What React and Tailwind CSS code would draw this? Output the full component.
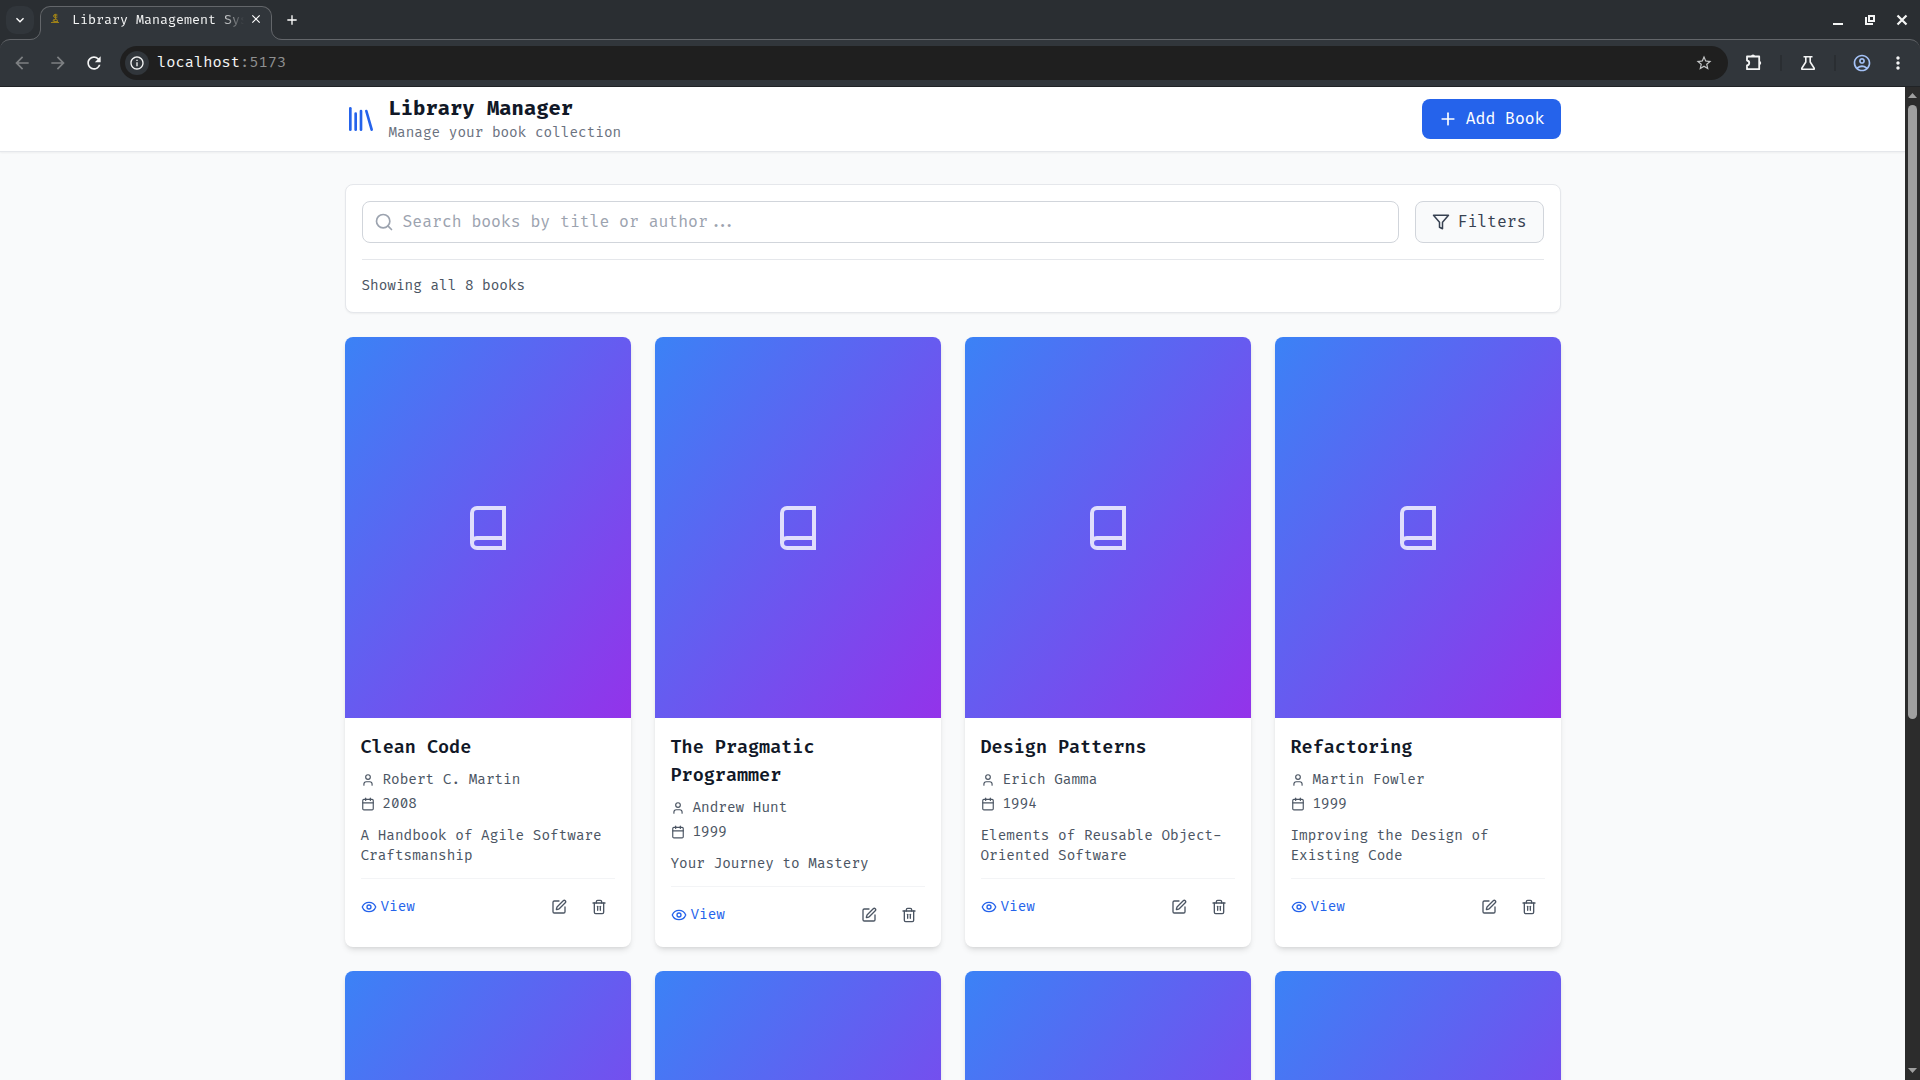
import React from "react";
import { Library, Plus, Search, User, Calendar, Eye, SquarePen, Trash2 } from "lucide-react";
import {
  MdArrowBack,
  MdArrowForward,
  MdRefresh,
  MdInfoOutline,
  MdStarBorder,
  MdOutlineAccountCircle,
  MdMoreVert,
  MdKeyboardArrowDown,
  MdClose,
  MdAdd,
} from "react-icons/md";

const books = [
  { title: "Clean Code", author: "Robert C. Martin", year: 2008, text: "A Handbook of Agile Software Craftsmanship" },
  { title: "The Pragmatic Programmer", author: "Andrew Hunt", year: 1999, text: "Your Journey to Mastery" },
  { title: "Design Patterns", author: "Erich Gamma", year: 1994, text: "Elements of Reusable Object-Oriented Software" },
  { title: "Refactoring", author: "Martin Fowler", year: 1999, text: "Improving the Design of Existing Code" },
];

function BookIcon() {
  return (
    <svg className="size-12 text-white/80" viewBox="0 0 24 24" fill="none" stroke="currentColor" strokeWidth="2" strokeLinecap="round" aria-hidden="true">
      <path d="M4 19.5v-15A2.5 2.5 0 0 1 6.5 2H20v20H6.5a2.5 2.5 0 0 1 0-5H20" />
    </svg>
  );
}

function FilterIcon() {
  return (
    <svg className="size-[18px]" viewBox="0 0 24 24" fill="none" stroke="currentColor" strokeWidth="2" strokeLinecap="round" strokeLinejoin="round" aria-hidden="true">
      <polygon points="22 3 2 3 10 12.46 10 19 14 21 14 12.46 22 3" />
    </svg>
  );
}

function PuzzleIcon() {
  return (
    <svg className="size-5" viewBox="0 0 20 20" fill="none" stroke="currentColor" strokeWidth="1.8" strokeLinejoin="round" aria-hidden="true">
      <path d="M3 3.500H15.200V16.200H3V12.500C6 12 6 8 3 7.500Z" />
      <path d="M7 3.500a2 2 0 0 1 4 0ZM15.200 8a2 2 0 0 1 0 4Z" fill="currentColor" stroke="none" />
    </svg>
  );
}

function FlaskIcon() {
  return (
    <svg className="size-5" viewBox="0 0 20 20" fill="none" stroke="currentColor" strokeWidth="1.6" strokeLinejoin="round" aria-hidden="true">
      <path d="M5.500 3.800H14.500M7.800 3.800V9L3.800 15.200V16.200H16.200V15.200L12.200 9V3.800" />
    </svg>
  );
}

function Favicon() {
  return (
    <svg className="size-4 shrink-0" viewBox="0 0 16 16" fill="none" stroke="#9c8018" strokeWidth="1" aria-hidden="true">
      <path d="M9.500 4C8.500 2.800 5.500 3 5.500 5C5.500 7 8.500 7 9.500 6M6 4.800H9M7.500 3V8M5 9L8.500 8L9.500 10M4.500 10L6.500 9.500M3 11.500H11M5.500 10.500H10" />
    </svg>
  );
}

function TabFlare({ className }) {
  return (
    <svg className={className} width="11" height="10" viewBox="0 0 11 10" fill="none" aria-hidden="true">
      <path d="M0 10V9.500A10 10 0 0 0 10.500 0H11V10Z" fill="#31363b" />
      <path d="M0 9.500A10 10 0 0 0 10.500 0" stroke="#63666a" />
    </svg>
  );
}

function TabStrip() {
  return (
    <div className="flex h-[39px] items-start pr-2.5">
      <button aria-label="Search tabs" className="ml-1.5 mt-1.5 grid size-7 place-items-center rounded-[10px] bg-[#31363b] text-white">
        <MdKeyboardArrowDown className="size-4" />
      </button>
      <div className="relative z-10 ml-1.5 mt-1.5 flex h-[34px] w-[232px] shrink-0 items-start rounded-t-[10px] border-x border-t border-[#63666a] bg-[#31363b] px-[7px] pt-1">
        <TabFlare className="absolute -left-[11px] bottom-0" />
        <TabFlare className="absolute -right-[11px] bottom-0 -scale-x-100" />
        <Favicon />
        <span className="ml-2 flex-1 overflow-hidden whitespace-nowrap text-[13px] leading-[18px] text-[#f4f5f5] [mask-image:linear-gradient(to_right,black_86%,transparent)]">
          Library Management System
        </span>
        <button aria-label="Close tab" className="ml-1 grid size-4 place-items-center text-white">
          <MdClose className="size-3.5" />
        </button>
      </div>
      <button aria-label="New tab" className="ml-2.5 mt-2.5 grid size-5 place-items-center text-white">
        <MdAdd className="size-4" />
      </button>
      <div className="ml-auto mt-3 flex items-center gap-4 text-[#f4f5f5]">
        <button aria-label="Minimize">
          <svg className="size-4" viewBox="0 0 16 16" aria-hidden="true"><path d="M3 11h10v2H3z" fill="currentColor" /></svg>
        </button>
        <button aria-label="Restore">
          <svg className="size-4" viewBox="0 0 16 16" fill="none" stroke="currentColor" strokeWidth="2" aria-hidden="true">
            <path d="M7 4h5v5H7z M4 5v7h7" />
          </svg>
        </button>
        <button aria-label="Close window">
          <svg className="size-4" viewBox="0 0 16 16" fill="none" stroke="currentColor" strokeWidth="2.200" aria-hidden="true"><path d="M3.500 3.500l9 9M12.500 3.500l-9 9" /></svg>
        </button>
      </div>
    </div>
  );
}

function Toolbar() {
  return (
    <div className="flex h-12 items-center rounded-t-[10px] border-b border-t border-b-[#202326] border-t-[#63666a] bg-[#31363b] text-[#f4f5f5]">
      <nav aria-label="History" className="flex items-center gap-4 pl-3">
        <button aria-label="Back" className="text-[#7d8083]"><MdArrowBack className="size-5" /></button>
        <button aria-label="Forward" className="text-[#7d8083]"><MdArrowForward className="size-5" /></button>
        <button aria-label="Reload"><MdRefresh className="size-5" /></button>
      </nav>
      <div className="ml-4 flex h-[34px] flex-1 items-center rounded-full bg-[#1f1f1f] px-[5px] pr-[15px]">
        <button aria-label="Site information" className="grid size-6 place-items-center rounded-full bg-[#31363b]">
          <MdInfoOutline className="size-4" />
        </button>
        <span className="ml-2 flex-1 text-[15px] leading-5">
          localhost<span className="text-[#8e8f90]">:5173</span>
        </span>
        <button aria-label="Bookmark this page" className="text-[#c4c6c7]"><MdStarBorder className="size-[18px]" /></button>
      </div>
      <div className="flex items-center pl-4 pr-3">
        <button aria-label="Extensions"><PuzzleIcon /></button>
        <span className="mx-4 h-4 w-0.5 bg-[#2a2e32]" />
        <button aria-label="Labs"><FlaskIcon /></button>
        <span className="mx-4 h-4 w-0.5 bg-[#2a2e32]" />
        <button aria-label="Profile" className="text-[#a4c2f7]"><MdOutlineAccountCircle className="size-5" /></button>
        <button aria-label="Menu" className="ml-4"><MdMoreVert className="size-5" /></button>
      </div>
    </div>
  );
}

function Scrollbar() {
  return (
    <div className="flex w-[15px] shrink-0 flex-col items-center bg-[#2c2c2c]" aria-hidden="true">
      <svg className="h-[18px] w-[9px]" viewBox="0 0 9 18"><path d="M0 11L4.500 6L9 11z" fill="#9f9f9f" /></svg>
      <div className="flex w-full flex-1 flex-col items-center">
        <div className="h-[64%] w-[9px] rounded-full bg-[#9f9f9f]" />
      </div>
      <svg className="h-[15px] w-[9px]" viewBox="0 0 9 15"><path d="M0 3L4.500 8L9 3z" fill="#9f9f9f" /></svg>
    </div>
  );
}

function Cover() {
  return (
    <div className="flex aspect-3/4 items-center justify-center bg-linear-to-br/srgb from-[#3b82f6] to-[#9333ea]">
      <BookIcon />
    </div>
  );
}

function BookCard({ book }) {
  return (
    <article className="overflow-hidden rounded-lg bg-white shadow-md">
      <Cover />
      <div className="p-4">
        <h2 className="mb-2 text-lg font-semibold text-[#111827]">{book.title}</h2>
        <div className="mb-3 flex flex-col gap-1 text-sm text-[#4b5563]">
          <p className="flex items-center gap-2"><User className="size-3.5" />{book.author}</p>
          <p className="flex items-center gap-2"><Calendar className="size-3.5" />{book.year}</p>
        </div>
        <p className="mb-3 text-sm text-[#4b5563]">{book.text}</p>
        <div className="flex items-center justify-between border-t border-[#f3f4f6] pt-3">
          <button className="flex items-center gap-1 text-sm text-[#2563eb]"><Eye className="size-4" />View</button>
          <div className="flex gap-2 text-[#4b5563]">
            <button aria-label={"Edit " + book.title} className="p-2"><SquarePen className="size-4" /></button>
            <button aria-label={"Delete " + book.title} className="p-2"><Trash2 className="size-4" /></button>
          </div>
        </div>
      </div>
    </article>
  );
}

export default function App() {
  return (
    <div className="flex h-screen flex-col overflow-hidden bg-[#2a2e32] font-['Fira_Code','DejaVu_Sans_Mono',monospace]">
      <TabStrip />
      <Toolbar />
      <div className="flex min-h-0 flex-1">
        <div className="min-w-0 flex-1 overflow-hidden bg-[#f9fafb]">
          <header className="border-b border-[#e5e7eb] bg-white shadow-xs">
            <div className="mx-auto flex h-16 max-w-7xl items-center justify-between px-8">
              <div className="flex items-center gap-3">
                <Library className="size-8 text-[#2563eb]" />
                <div>
                  <h1 className="text-xl font-bold leading-7 text-[#111827]">Library Manager</h1>
                  <p className="text-sm text-[#6b7280]">Manage your book collection</p>
                </div>
              </div>
              <button className="flex items-center gap-2 rounded-lg bg-[#2563eb] px-4 py-2 text-white"><Plus className="size-5" />Add Book</button>
            </div>
          </header>
          <main className="mx-auto max-w-7xl px-8 py-8">
            <section className="mb-6 rounded-lg border border-[#e5e7eb] bg-white p-4 shadow-xs">
              <div className="flex gap-4">
                <div className="relative flex-1">
                  <Search className="absolute left-3 top-1/2 size-5 -translate-y-1/2 text-[#9ca3af]" />
                  <input type="search" aria-label="Search books" placeholder="Search books by title or author..." className="w-full rounded-lg border border-[#d1d5db] py-2 pl-10 pr-4 placeholder:text-[#9ca3af]" />
                </div>
                <button className="flex items-center gap-2 rounded-lg border border-[#d1d5db] bg-[#f9fafb] px-4 py-2 text-[#374151]"><FilterIcon />Filters</button>
              </div>
              <p className="mt-4 border-t border-[#e5e7eb] pt-4 text-sm text-[#4b5563]">Showing all 8 books</p>
            </section>
            <div className="grid grid-cols-4 gap-6">
              {books.map((book) => <BookCard key={book.title} book={book} />)}
              {["a", "b", "c", "d"].map((id) => (
                <article key={id} className="overflow-hidden rounded-lg bg-white shadow-md">
                  <Cover />
                </article>
              ))}
            </div>
          </main>
        </div>
        <Scrollbar />
      </div>
    </div>
  );
}
